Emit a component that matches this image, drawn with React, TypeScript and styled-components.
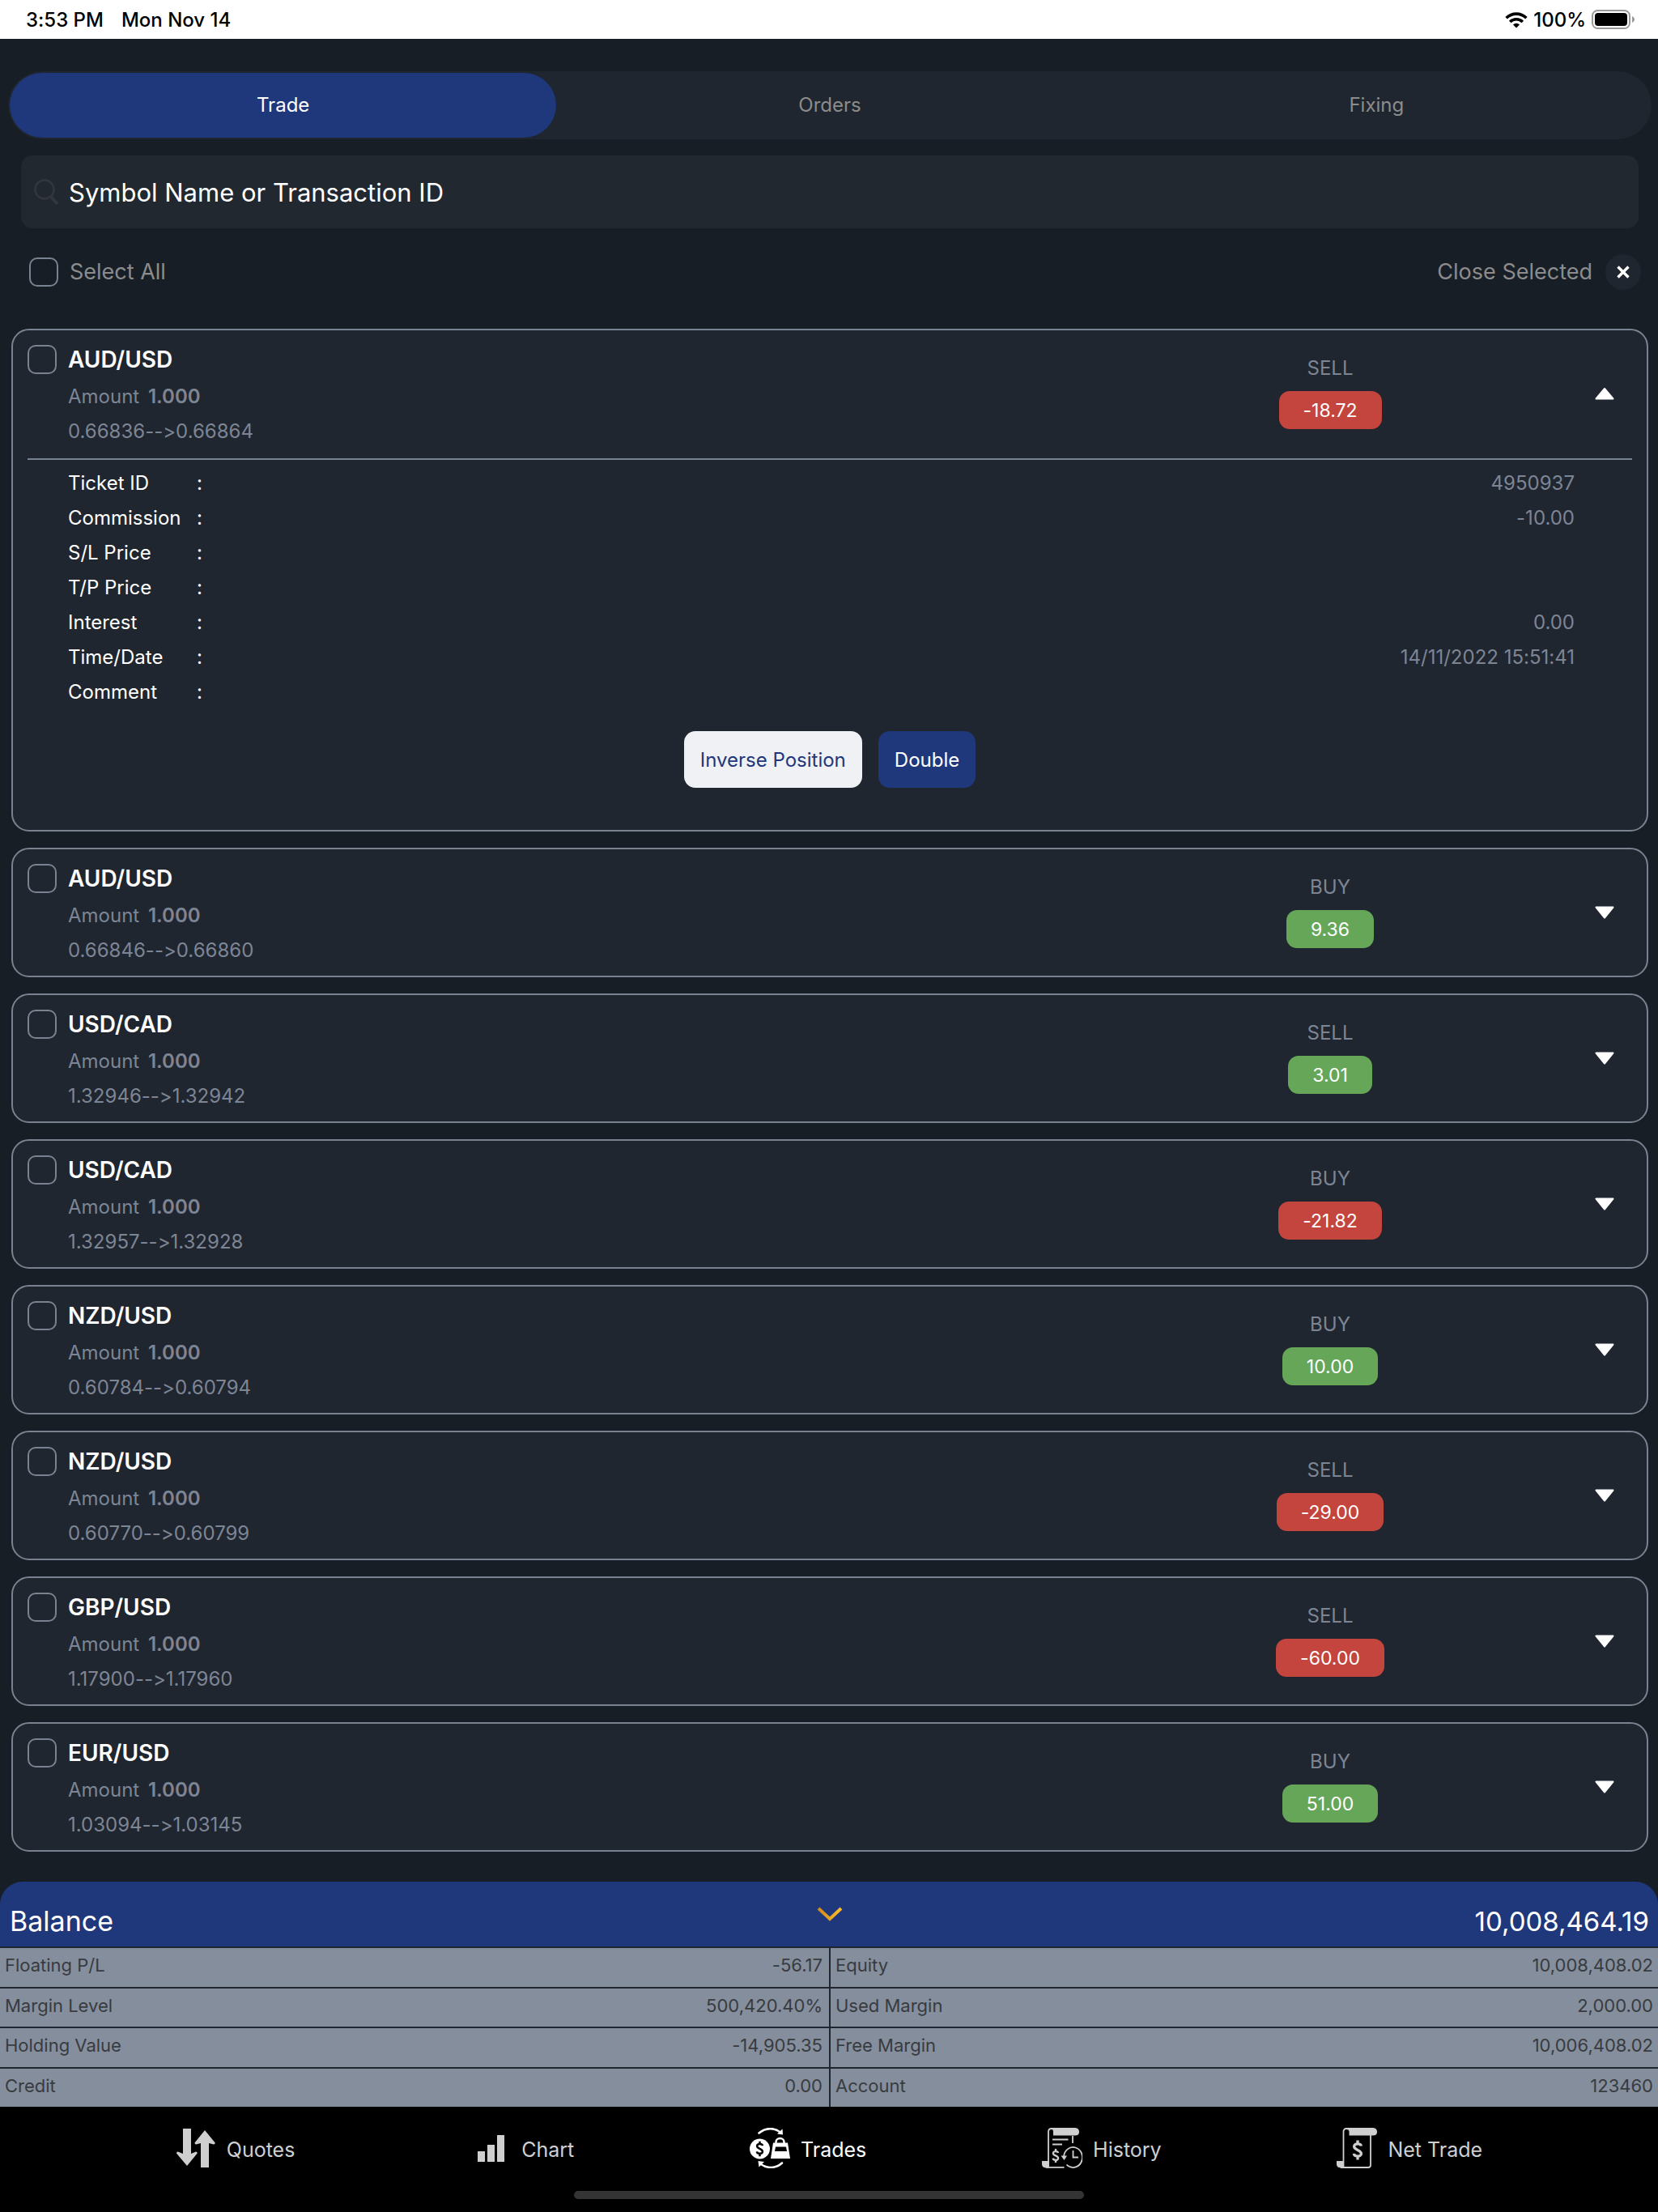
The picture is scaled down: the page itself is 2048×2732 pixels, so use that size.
import React, { useState } from "react";
import styled, { createGlobalStyle } from "styled-components";

const color = {
  page: "#171e26",
  panel: "#1f262f",
  field: "#212830",
  line: "#798290",
  blue: "#1f377b",
  muted: "#7d8595",
  grey: "#8c8c8c",
  red: "#c4453d",
  green: "#66a659",
  table: "#858e9c",
  tableText: "#383b40",
  nav: "#cfcfcf",
};

const GlobalStyle = createGlobalStyle`
  *, *::before, *::after { box-sizing: border-box; }
  body {
    margin: 0;
    background: ${color.page};
    color: #fff;
    font-family: Inter, "Liberation Sans", sans-serif;
    font-size: 24px;
    font-variant-ligatures: none;
  }
  button, input { font: inherit; color: inherit; }
  button { border: 0; padding: 0; cursor: pointer; }
  h2, dl, dd, dt, p { margin: 0; font-weight: inherit; font-size: inherit; }
`;

const Screen = styled.div`
  min-height: 100vh;
  display: flex;
  flex-direction: column;
`;

const StatusBar = styled.header`
  height: 48px;
  padding: 0 28px 0 32px;
  display: flex;
  align-items: center;
  justify-content: space-between;
  background: #fff;
  color: #000;
  font-weight: 500;
`;

const StatusGroup = styled.div<{ $gap: number }>`
  display: flex;
  align-items: center;
  gap: ${(p) => p.$gap}px;
`;

const Tabs = styled.div`
  margin: 40px 8px 20px 10px;
  padding: 2px;
  display: grid;
  grid-template-columns: repeat(3, 1fr);
  border-radius: 42px;
  background: ${color.panel};
`;

const Tab = styled.button<{ $active: boolean }>`
  height: 80px;
  padding-bottom: 2px;
  border-radius: 40px;
  background: ${(p) => (p.$active ? color.blue : "transparent")};
  color: ${(p) => (p.$active ? "#fff" : color.grey)};
`;

const Search = styled.label`
  margin: 0 24px 0 26px;
  height: 90px;
  padding: 0 16px;
  display: flex;
  align-items: center;
  gap: 13px;
  border-radius: 14px;
  background: ${color.field};
`;

const SearchInput = styled.input`
  flex: 1;
  height: 100%;
  padding: 0;
  border: 0;
  outline: 0;
  background: transparent;
  font-size: 31px;
  &::placeholder { color: #fff; opacity: 1; }
`;

const SelectRow = styled.div`
  margin: 32px 21px 48px 36px;
  height: 44px;
  display: flex;
  align-items: center;
  justify-content: space-between;
  color: ${color.grey};
  font-size: 27px;
`;

const SelectAll = styled.label`
  display: flex;
  align-items: center;
  gap: 14px;
`;

const SelectText = styled.span`
  padding-bottom: 2px;
`;

const Checkbox = styled.input.attrs({ type: "checkbox" })`
  appearance: none;
  flex: none;
  width: 36px;
  height: 36px;
  margin: 0;
  border: 2px solid ${color.line};
  border-radius: 10px;
  &:checked { background: ${color.blue}; }
`;

const CloseSelected = styled.button`
  display: flex;
  align-items: center;
  gap: 16px;
  background: transparent;
`;

const Round = styled.span`
  width: 44px;
  height: 44px;
  display: grid;
  place-items: center;
  border-radius: 50%;
  background: ${color.panel};
`;

const List = styled.main`
  flex: 1;
  padding: 0 12px 37px 14px;
  display: flex;
  flex-direction: column;
  gap: 20px;
`;

const Card = styled.article`
  padding: 0 18px;
  border: 2px solid ${color.line};
  border-radius: 22px;
  background: ${color.panel};
`;

const CardHead = styled.div`
  height: 156px;
  padding-top: 18px;
  display: grid;
  grid-template-columns: 1fr 610px 68px;
`;

const Instrument = styled.div`
  display: flex;
  gap: 14px;
`;

const Symbol = styled.h2`
  margin-bottom: 6px;
  font-size: 28px;
  font-weight: 600;
  line-height: 36px;
`;

const Quote = styled.p`
  color: ${color.muted};
  line-height: 43px;
`;

const Amount = styled.b`
  margin-left: 4px;
  font-weight: 600;
`;

const Deal = styled.div`
  padding-top: 14px;
  display: flex;
  flex-direction: column;
  align-items: center;
  gap: 13px;
  color: ${color.muted};
  line-height: 30px;
`;

const Profit = styled.span<{ $loss: boolean }>`
  height: 47px;
  padding: 0 30px;
  border-radius: 13px;
  background: ${(p) => (p.$loss ? color.red : color.green)};
  color: #fff;
  font-size: 23px;
  line-height: 48px;
`;

const Toggle = styled.button`
  margin-bottom: 18px;
  display: grid;
  place-items: center;
  background: transparent;
`;

const Details = styled.dl`
  margin-top: 2px;
  padding: 7px 71px 0 50px;
  border-top: 2px solid ${color.line};
`;

const Detail = styled.div`
  display: grid;
  grid-template-columns: 159px auto 1fr;
  line-height: 43px;
`;

const DetailValue = styled.dd`
  text-align: right;
  color: ${color.muted};
`;

const Actions = styled.div`
  padding: 27px 0 52px;
  display: flex;
  justify-content: center;
  gap: 20px;
`;

const Action = styled.button<{ $primary?: boolean }>`
  height: 70px;
  padding: 0 20px;
  border-radius: 14px;
  background: ${(p) => (p.$primary ? color.blue : "#f0f1f4")};
  color: ${(p) => (p.$primary ? "#fff" : color.blue)};
`;

const Balance = styled.button`
  width: 100%;
  height: 80px;
  padding: 0 11px 0 12px;
  display: grid;
  grid-template-columns: 1fr auto 1fr;
  align-items: center;
  border-radius: 28px 28px 0 0;
  background: ${color.blue};
  font-size: 34px;
  text-align: left;
`;

const BalanceText = styled.span<{ $end?: boolean }>`
  padding-top: 17px;
  font-size: ${(p) => (p.$end ? 33 : 34)}px;
  text-align: ${(p) => (p.$end ? "right" : "left")};
`;

const Summary = styled.table`
  width: 100%;
  height: 198px;
  border-collapse: separate;
  border-spacing: 0;
  table-layout: fixed;
  background: ${color.table};
  color: ${color.tableText};
  font-size: 22px;
`;

const SummaryLabel = styled.th`
  padding: 0 0 5px 6px;
  border-top: 2px solid ${color.panel};
  font-weight: 400;
  text-align: left;
  &:nth-child(3) { border-left: 2px solid ${color.panel}; }
`;

const SummaryValue = styled.td`
  padding: 0 6px 5px 0;
  border-top: 2px solid ${color.panel};
  text-align: right;
  &:nth-child(2) { padding-right: 8px; }
`;

const Bottom = styled.footer`
  height: 130px;
  padding: 26px 0 16px;
  display: flex;
  flex-direction: column;
  align-items: center;
  justify-content: space-between;
  background: #000;
`;

const Nav = styled.nav`
  align-self: stretch;
  display: flex;
  justify-content: space-evenly;
`;

const NavLink = styled.a<{ $active: boolean }>`
  display: flex;
  align-items: center;
  gap: 13px;
  color: ${(p) => (p.$active ? "#fff" : color.nav)};
  font-size: 25px;
  line-height: 30px;
  text-decoration: none;
`;

const NavText = styled.span`
  padding-top: 3px;
`;

const HomeIndicator = styled.div`
  width: 630px;
  height: 10px;
  border-radius: 5px;
  background: #343434;
`;

const Wifi = () => (
  <svg width="28" height="21" viewBox="0 0 28 21" fill="none" stroke="#000" strokeWidth="3.6">
    <path d="M1.6 8.2a17.6 17.6 0 0 1 24.8 0" />
    <path d="M6.2 13a11 11 0 0 1 15.6 0" />
    <path d="M14 20.5l-4-4a5.7 5.7 0 0 1 8 0z" fill="#000" stroke="none" />
  </svg>
);

const Battery = () => (
  <svg width="54" height="24" viewBox="0 0 54 24">
    <rect x="1" y="1" width="46" height="22" rx="6.5" fill="none" stroke="#9a9a9a" strokeWidth="2" />
    <rect x="4" y="4" width="40" height="16" rx="4" fill="#000" />
    <path d="M50 8c4 1.500 4 6.500 0 8z" fill="#9a9a9a" />
  </svg>
);

const SearchIcon = () => (
  <svg width="30" height="32" viewBox="0 0 30 32" fill="none" stroke="#33363d" strokeWidth="2.600">
    <circle cx="13" cy="13" r="11.500" />
    <path d="M21 22l8 9" strokeWidth="4" />
  </svg>
);

const Cross = () => (
  <svg width="16" height="16" viewBox="0 0 16 16" stroke="#fff" strokeWidth="3.400">
    <path d="M1.500 1.500l13 13M14.500 1.500l-13 13" />
  </svg>
);

const Caret = ({ up }: { up: boolean }) => (
  <svg width="24" height="16" viewBox="0 0 24 16" fill="#fff" stroke="#fff" strokeWidth="2" strokeLinejoin="round">
    <path d={up ? "M1.500 14.500h21L12 2z" : "M1.500 1.500h21L12 14.500z"} />
  </svg>
);

const Chevron = () => (
  <svg width="32" height="18" viewBox="0 0 32 18" fill="none" strokeWidth="4">
    <defs>
      <linearGradient id="gold" x1="0" x2="1" y1="0" y2="0">
        <stop offset="0" stopColor="#d18a1f" />
        <stop offset="1" stopColor="#fbbd2c" />
      </linearGradient>
    </defs>
    <path d="M2 2L16 15 30 2" stroke="url(#gold)" />
  </svg>
);

const Dollar = ({ x, y, scale = 1, width = 3 }: { x: number; y: number; scale?: number; width?: number }) => (
  <path
    transform={`translate(${x} ${y}) scale(${scale})`}
    d="M4 -4.500C3.600 -7.500 -4 -8.200 -4 -4C-4 0.300 4 -0.500 4 4C4 8.200 -4 7.500 -4.200 4M0 -11V-7M0 7V11"
    fill="none"
    strokeWidth={width}
  />
);

const QuotesIcon = () => (
  <svg width="50" height="50" viewBox="0 0 50 50" fill="currentColor">
    <path d="M9 1h10v31l6-2.500q1.800.2 1.700 2L14 47 1 31.500q0-1.800 1.700-2L9 32z" />
    <path d="M31 49h10V19l6 1.500q1.800-.2 1.700-2L36 3 23.500 18.500q0 1.800 1.700 2L31 19z" />
  </svg>
);

const ChartIcon = () => (
  <svg width="50" height="50" viewBox="0 0 50 50" fill="currentColor">
    <path d="M9 29h9v13H9zM21 21h9v21h-9zM33 9h9v33h-9z" />
  </svg>
);

const TradesIcon = () => (
  <svg width="50" height="50" viewBox="0 0 50 50" stroke="currentColor" fill="none">
    <circle cx="12.500" cy="26" r="12.500" fill="currentColor" stroke="none" />
    <g stroke="#000"><Dollar x={12.5} y={26} scale={0.85} width={3} /></g>
    <path fill="currentColor" stroke="none" d="M29 18.500h18L50 38H26z" />
    <path d="M32.500 19v-1.500a5 4.500 0 0 1 10 0V19" strokeWidth="2.500" />
    <path d="M32 23.500h13l1 5.500H31z" fill="#000" stroke="none" />
    <path d="M11.500 6.500C20-.5 30-.5 38 5.500" strokeWidth="2.600" strokeLinecap="round" />
    <path fill="currentColor" stroke="none" d="M40.500 1.500L41 8.500l-7-1z" />
    <path d="M40 43.500C32 50.500 22 50.500 14 45" strokeWidth="2.600" strokeLinecap="round" />
    <path fill="currentColor" stroke="none" d="M10.500 41l7.500 1-6.500 6.500z" />
  </svg>
);

const HistoryIcon = () => (
  <svg width="50" height="50" viewBox="0 0 50 50" stroke="currentColor" fill="none" strokeWidth="1.800">
    <path fill="currentColor" stroke="none" d="M12 0h29q5 .5 5 5t-5 4.500H14V5Q14 2 12 2zM0 41h9v8.500H5Q0 49 0 45z" />
    <path d="M8 48.500V5Q8 1 12 1M38 10v9M5 48.900h22.500" />
    <path d="M13 14.500h19.500M13 20.500h12" strokeWidth="2" />
    <Dollar x={17} y={34.5} scale={0.78} width={3} />
    <path d="M27 36a11.500 12.500 0 1 1 3.500 9.500M38.500 28v8.500H45" />
    <path fill="currentColor" stroke="none" d="M23.500 34.500h7.500L27.500 40z" />
  </svg>
);

const NetTradeIcon = () => (
  <svg width="50" height="50" viewBox="0 0 50 50" stroke="currentColor" fill="none" strokeWidth="1.800">
    <path fill="currentColor" stroke="none" d="M12 0h33q5 .5 5 5t-5 4.500H15.500V5Q15.500 2 12 2zM0 41h9v8.500H5Q0 49 0 45z" />
    <path d="M8.500 48.500V5Q8.500 1 12 1M42 9v37q0 3-3 3H5" />
    <Dollar x={26} y={27.5} scale={1.1} width={3} />
  </svg>
);

const trades = [
  { symbol: "AUD/USD", side: "SELL", profit: "-18.72", price: "0.66836-->0.66864" },
  { symbol: "AUD/USD", side: "BUY", profit: "9.36", price: "0.66846-->0.66860" },
  { symbol: "USD/CAD", side: "SELL", profit: "3.01", price: "1.32946-->1.32942" },
  { symbol: "USD/CAD", side: "BUY", profit: "-21.82", price: "1.32957-->1.32928" },
  { symbol: "NZD/USD", side: "BUY", profit: "10.00", price: "0.60784-->0.60794" },
  { symbol: "NZD/USD", side: "SELL", profit: "-29.00", price: "0.60770-->0.60799" },
  { symbol: "GBP/USD", side: "SELL", profit: "-60.00", price: "1.17900-->1.17960" },
  { symbol: "EUR/USD", side: "BUY", profit: "51.00", price: "1.03094-->1.03145" },
];

const details = [
  ["Ticket ID", "4950937"],
  ["Commission", "-10.00"],
  ["S/L Price", ""],
  ["T/P Price", ""],
  ["Interest", "0.00"],
  ["Time/Date", "14/11/2022 15:51:41"],
  ["Comment", ""],
];

const summary = [
  ["Floating P/L", "-56.17", "Equity", "10,008,408.02"],
  ["Margin Level", "500,420.40%", "Used Margin", "2,000.00"],
  ["Holding Value", "-14,905.35", "Free Margin", "10,006,408.02"],
  ["Credit", "0.00", "Account", "123460"],
];

const pages = [
  { name: "Quotes", Icon: QuotesIcon },
  { name: "Chart", Icon: ChartIcon },
  { name: "Trades", Icon: TradesIcon },
  { name: "History", Icon: HistoryIcon },
  { name: "Net Trade", Icon: NetTradeIcon },
];

export default function App() {
  const [tab, setTab] = useState("Trade");
  const [open, setOpen] = useState(0);

  return (
    <Screen>
      <GlobalStyle />
      <StatusBar>
        <StatusGroup $gap={22}>
          <span>3:53 PM</span>
          <span>Mon Nov 14</span>
        </StatusGroup>
        <StatusGroup $gap={7}>
          <Wifi />
          <span>100%</span>
          <Battery />
        </StatusGroup>
      </StatusBar>

      <Tabs role="tablist">
        {["Trade", "Orders", "Fixing"].map((name) => (
          <Tab key={name} role="tab" aria-selected={tab === name} $active={tab === name} onClick={() => setTab(name)}>
            {name}
          </Tab>
        ))}
      </Tabs>

      <Search>
        <SearchIcon />
        <SearchInput type="text" aria-label="Search" placeholder="Symbol Name or Transaction ID" />
      </Search>

      <SelectRow>
        <SelectAll>
          <Checkbox />
          <SelectText>Select All</SelectText>
        </SelectAll>
        <CloseSelected>
          <SelectText>Close Selected</SelectText>
          <Round>
            <Cross />
          </Round>
        </CloseSelected>
      </SelectRow>

      <List>
        {trades.map((trade, i) => (
          <Card key={trade.price}>
            <CardHead>
              <Instrument>
                <Checkbox aria-label={`Select ${trade.symbol}`} />
                <div>
                  <Symbol>{trade.symbol}</Symbol>
                  <Quote>
                    Amount <Amount>1.000</Amount>
                  </Quote>
                  <Quote>{trade.price}</Quote>
                </div>
              </Instrument>
              <Deal>
                <span>{trade.side}</span>
                <Profit $loss={trade.profit.startsWith("-")}>{trade.profit}</Profit>
              </Deal>
              <Toggle
                aria-label="Details"
                aria-expanded={open === i}
                onClick={() => setOpen(open === i ? -1 : i)}
              >
                <Caret up={open === i} />
              </Toggle>
            </CardHead>
            {open === i && (
              <>
                <Details>
                  {details.map(([label, value]) => (
                    <Detail key={label}>
                      <dt>{label}</dt>
                      <span>:</span>
                      <DetailValue>{value}</DetailValue>
                    </Detail>
                  ))}
                </Details>
                <Actions>
                  <Action>Inverse Position</Action>
                  <Action $primary>Double</Action>
                </Actions>
              </>
            )}
          </Card>
        ))}
      </List>

      <Balance>
        <BalanceText>Balance</BalanceText>
        <Chevron />
        <BalanceText $end>10,008,464.19</BalanceText>
      </Balance>
      <Summary>
        <tbody>
          {summary.map(([a, b, c, d]) => (
            <tr key={a}>
              <SummaryLabel scope="row">{a}</SummaryLabel>
              <SummaryValue>{b}</SummaryValue>
              <SummaryLabel scope="row">{c}</SummaryLabel>
              <SummaryValue>{d}</SummaryValue>
            </tr>
          ))}
        </tbody>
      </Summary>

      <Bottom>
        <Nav>
          {pages.map(({ name, Icon }) => (
            <NavLink key={name} href={`#${name}`} $active={name === "Trades"}>
              <Icon />
              <NavText>{name}</NavText>
            </NavLink>
          ))}
        </Nav>
        <HomeIndicator />
      </Bottom>
    </Screen>
  );
}
